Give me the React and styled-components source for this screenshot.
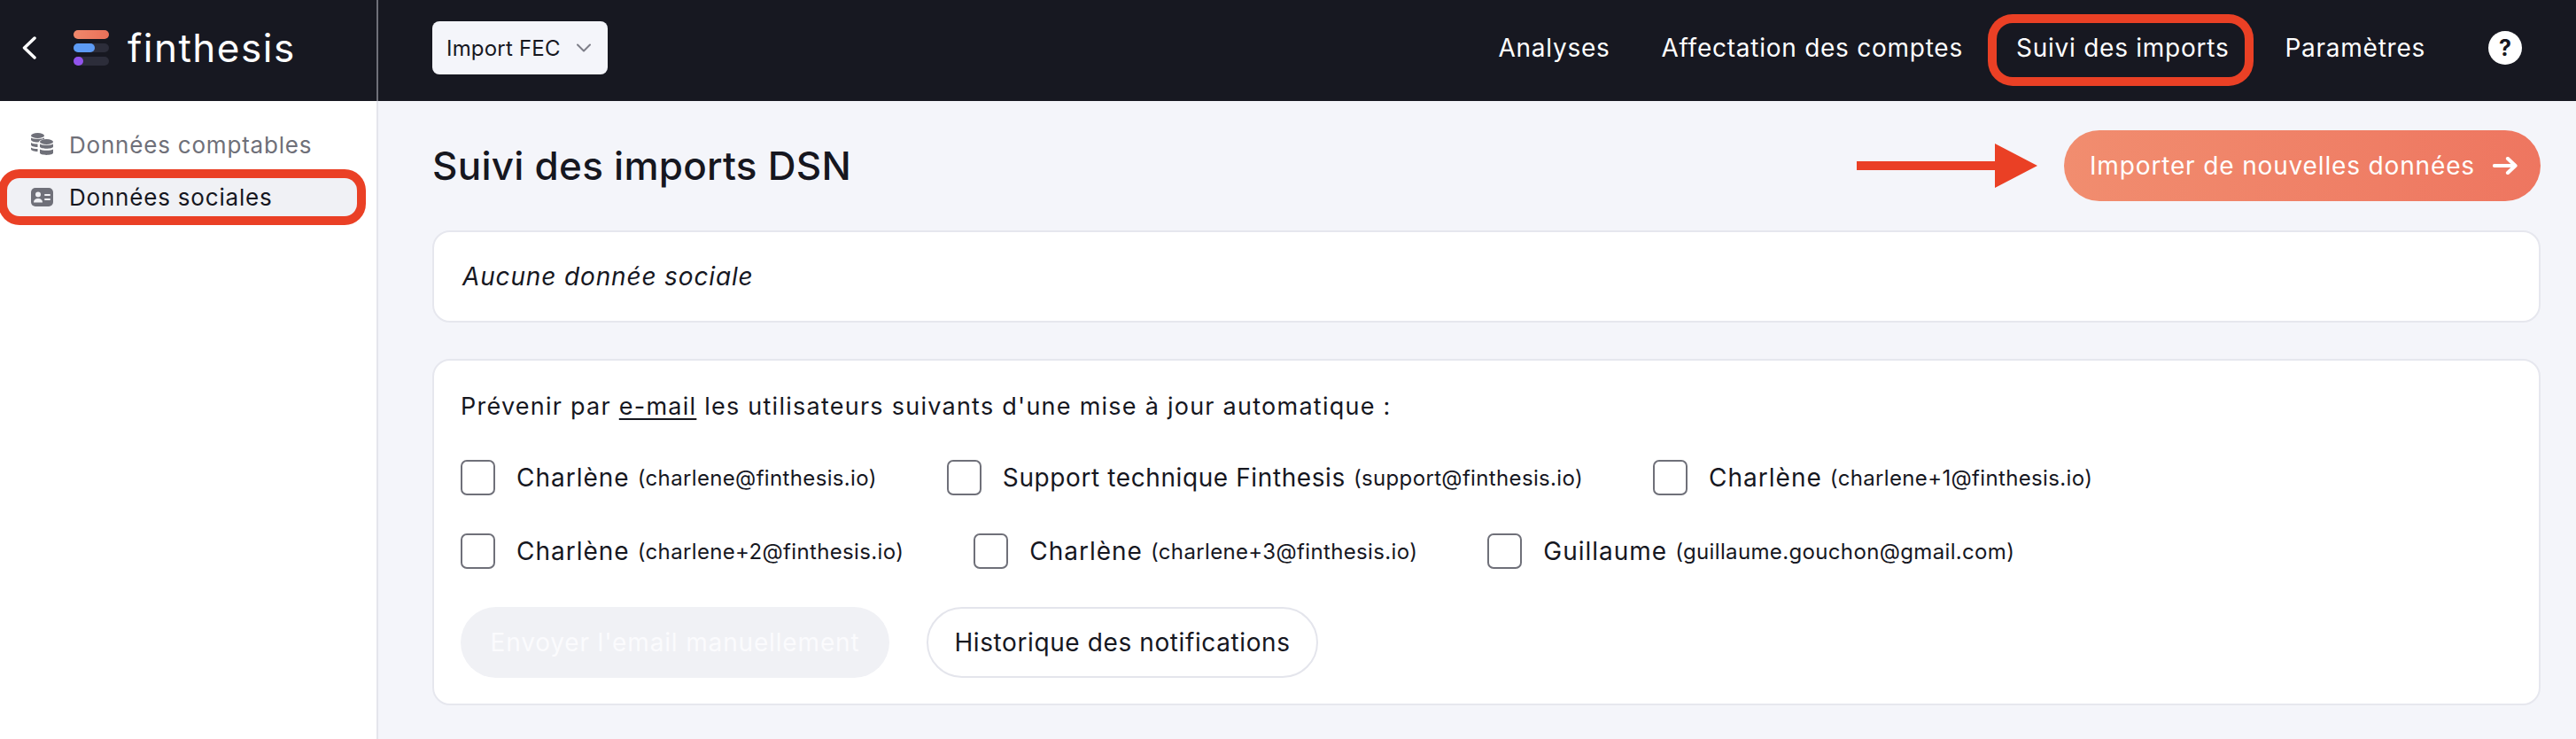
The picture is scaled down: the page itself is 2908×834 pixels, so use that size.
import React from "react";
import styled, { createGlobalStyle } from "styled-components";

const GlobalStyle = createGlobalStyle`
  html, body {
    margin: 0;
    padding: 0;
    background: #f4f5fa;
    font-family: "Inter", "Liberation Sans", sans-serif;
    color: #16171f;
  }
  * { box-sizing: border-box; }
`;

const Page = styled.div`
  width: 2908px;
  height: 834px;
  overflow: hidden;
  display: flex;
  flex-direction: column;
`;

const TopBar = styled.header`
  height: 114px;
  flex: none;
  display: flex;
  align-items: stretch;
  background: #171821;
`;

const Brand = styled.div`
  width: 427px;
  flex: none;
  display: flex;
  align-items: center;
  padding-left: 25px;
  border-right: 2px solid #6f7079;
`;

const BackIcon = styled.svg`
  flex: none;
  margin-right: 42px;
  margin-top: -6px;
`;

const LogoIcon = styled.svg`
  flex: none;
  margin-top: -6px;
`;

const LogoWord = styled.span`
  margin-left: 21px;
  margin-top: -6px;
  font-size: 44px;
  font-weight: 400;
  letter-spacing: 1.5px;
  color: #ffffff;
`;

const TopBarRest = styled.div`
  flex: 1;
  display: flex;
  align-items: center;
  padding: 0 61px 0 61px;
`;

const ModeSelect = styled.div`
  width: 198px;
  height: 60px;
  margin-top: -6px;
  display: flex;
  align-items: center;
  justify-content: space-between;
  padding: 0 19px 0 16px;
  background: #f4f5fa;
  border-radius: 8px;
  font-size: 24px;
  letter-spacing: 0.2px;
`;

const Nav = styled.nav`
  margin-left: auto;
  margin-top: -1px;
  display: flex;
  align-items: center;
`;

const NavItem = styled.a`
  display: flex;
  align-items: center;
  height: 61px;
  margin-left: ${(p) => p.$gap}px;
  padding: ${(p) => (p.$ringed ? "0 18px 5px 22px" : "0 0 5px")};
  font-size: 28px;
  font-weight: 400;
  letter-spacing: 0.75px;
  color: #ffffff;
  border-radius: 18px;
  box-shadow: ${(p) => (p.$ringed ? "0 0 0 10px #ea4025" : "none")};
`;

const HelpDot = styled.span`
  width: 38px;
  height: 38px;
  margin: 0 0 5px 71px;
  border-radius: 50%;
  background: #ffffff;
  color: #171821;
  font-size: 25px;
  font-weight: 700;
  display: flex;
  align-items: center;
  justify-content: center;
`;

const Body = styled.div`
  flex: 1;
  display: flex;
  min-height: 0;
`;

const SideBar = styled.aside`
  width: 427px;
  flex: none;
  background: #ffffff;
  border-right: 2px solid #e4e5ec;
  padding-top: 28px;
  display: flex;
  flex-direction: column;
  gap: 16px;
`;

const SideItem = styled.a`
  display: flex;
  align-items: center;
  gap: 18px;
  width: 395px;
  height: 43px;
  margin-left: 8px;
  padding-left: 27px;
  font-size: 26px;
  letter-spacing: 0.8px;
  color: ${(p) => (p.$active ? "#16171f" : "#6f7079")};
  background: ${(p) => (p.$active ? "#f0f1f5" : "transparent")};
  border-radius: 14px;
  box-shadow: ${(p) => (p.$active ? "0 0 0 10px #ea4025" : "none")};
`;

const SideIcon = styled.svg`
  flex: none;
`;

const Main = styled.main`
  flex: 1;
  padding: 33px 40px 0 61px;
  display: flex;
  flex-direction: column;
`;

const TitleRow = styled.div`
  display: flex;
  align-items: center;
  height: 80px;
`;

const Title = styled.h1`
  margin: 0;
  font-size: 44px;
  font-weight: 500;
  letter-spacing: 0.25px;
  color: #16171f;
`;

const RedArrow = styled.svg`
  margin-left: auto;
  margin-right: 30px;
  flex: none;
`;

const ImportButton = styled.button`
  width: 538px;
  height: 80px;
  border: 0;
  border-radius: 40px;
  background: linear-gradient(90deg, #f18d6f, #ee7660);
  color: #ffffff;
  font: 400 28px "Inter", "Liberation Sans", sans-serif;
  letter-spacing: 0.85px;
  display: flex;
  align-items: center;
  padding: 0 26px 0 29px;
  justify-content: space-between;
`;

const Card = styled.section`
  background: #ffffff;
  border: 2px solid #e6e7ee;
  border-radius: 20px;
  margin-top: ${(p) => p.$top}px;
`;

const EmptyCard = styled(Card)`
  height: 104px;
  display: flex;
  align-items: center;
  padding: 0 32px;
  font-size: 28px;
  font-style: italic;
  letter-spacing: 0.85px;
`;

const NotifyCard = styled(Card)`
  height: 391px;
  padding: 32px 30px 0 30px;
  display: flex;
  flex-direction: column;
`;

const NotifyLabel = styled.p`
  margin: 0 0 40px;
  height: 40px;
  line-height: 40px;
  font-size: 27px;
  letter-spacing: 1.25px;
`;

const EmailWord = styled.span`
  text-decoration: underline;
  text-underline-offset: 4px;
`;

const PersonRow = styled.div`
  display: flex;
  align-items: center;
  height: 40px;
  margin-bottom: 43px;
  gap: 79px;
`;

const Person = styled.label`
  display: flex;
  align-items: center;
`;

const Box = styled.span`
  width: 39px;
  height: 40px;
  flex: none;
  background: #ffffff;
  border: 2px solid #6f7079;
  border-radius: 7px;
  margin-right: 24px;
`;

const PersonName = styled.span`
  font-size: 28px;
  letter-spacing: ${(p) => (p.$long ? "0.6px" : "1px")};
  margin-right: 9px;
`;

const PersonMail = styled.span`
  font-size: 24px;
  letter-spacing: 0.35px;
`;

const ButtonRow = styled.div`
  display: flex;
  gap: 42px;
`;

const PillButton = styled.button`
  height: 80px;
  width: ${(p) => p.$width}px;
  border-radius: 40px;
  border: ${(p) => (p.$muted ? "0" : "2px solid #e4e5ec")};
  background: ${(p) => (p.$muted ? "#f0f1f5" : "#ffffff")};
  color: ${(p) => (p.$muted ? "#fbfbfd" : "#16171f")};
  font: 400 28px "Inter", "Liberation Sans", sans-serif;
  letter-spacing: ${(p) => (p.$muted ? "0.85px" : "0.6px")};
  padding: 0;
`;

const LogoMark = () => (
  <LogoIcon width="40" height="40" viewBox="0 0 40 40">
    <defs>
      <linearGradient id="logoTop" x1="0" x2="1" y1="0" y2="0">
        <stop offset="0" stopColor="#f0886c" />
        <stop offset="1" stopColor="#ea7058" />
      </linearGradient>
    </defs>
    <rect x="0" y="0" width="40" height="10" rx="5" fill="url(#logoTop)" />
    <rect x="0" y="15" width="40" height="10" rx="5" fill="#2c2d3a" />
    <rect x="0" y="15" width="24" height="10" rx="5" fill="#5d9bf5" />
    <rect x="0" y="30" width="40" height="10" rx="5" fill="#2c2d3a" />
    <rect x="0" y="30" width="11" height="10" rx="5" fill="#9153ec" />
  </LogoIcon>
);

const CoinsIcon = () => (
  <SideIcon width="25" height="27" viewBox="0 0 25 27" fill="#6f7079">
    <ellipse cx="7.500" cy="3" rx="7.500" ry="3" />
    <path d="M0 5.500c2 1.800 13 1.800 15 0v1.500c-3 .3-5.500 1.500-6.500 3.400c-4 .3-8.500-.8-8.500-2.900z" />
    <path d="M0 11c1.500 1 4 1.500 7.500 1.500v3.500c-4 0-7.500-1.100-7.500-2.800z" />
    <path d="M0 16.500c1.500 1 4 1.500 7.500 1.500v3c-4 0-7.500-1-7.500-2.700z" />
    <ellipse cx="17.500" cy="10" rx="7.500" ry="3" />
    <path d="M10 12.500c2 1.800 13 1.800 15 0v3c0 3-15 3-15 0z" />
    <path d="M10 18.500c2 1.800 13 1.800 15 0v4c0 3.200-15 3.200-15 0z" />
  </SideIcon>
);

const IdCardIcon = () => (
  <SideIcon width="25" height="21" viewBox="0 0 25 21">
    <rect width="25" height="21" rx="5" fill="#6f7079" />
    <circle cx="8" cy="7.500" r="3" fill="#f0f1f5" />
    <path d="M3 16.500c0-3 2-4.500 5-4.500s5 1.500 5 4.500z" fill="#f0f1f5" />
    <rect x="15" y="7" width="7" height="2" rx="1" fill="#f0f1f5" />
    <rect x="15" y="12" width="7" height="2" rx="1" fill="#f0f1f5" />
  </SideIcon>
);

const firstRow = [
  ["Charlène", "charlene@finthesis.io"],
  ["Support technique Finthesis", "support@finthesis.io"],
  ["Charlène", "charlene+1@finthesis.io"],
];

const secondRow = [
  ["Charlène", "charlene+2@finthesis.io"],
  ["Charlène", "charlene+3@finthesis.io"],
  ["Guillaume", "guillaume.gouchon@gmail.com"],
];

const People = ({ rows }) => (
  <PersonRow>
    {rows.map(([name, mail]) => (
      <Person key={mail}>
        <Box />
        <PersonName $long={name.length > 20}>{name}</PersonName>
        <PersonMail>({mail})</PersonMail>
      </Person>
    ))}
  </PersonRow>
);

export default function App() {
  return (
    <Page>
      <GlobalStyle />
      <TopBar>
        <Brand>
          <BackIcon width="16" height="26" viewBox="0 0 16 26" fill="none">
            <path d="M14 2L2.500 13L14 24" stroke="#fff" strokeWidth="3.500" strokeLinecap="round" strokeLinejoin="round" />
          </BackIcon>
          <LogoMark />
          <LogoWord>finthesis</LogoWord>
        </Brand>
        <TopBarRest>
          <ModeSelect>
            Import FEC
            <svg width="16" height="10" viewBox="0 0 16 10" fill="none">
              <path d="M1 1.500L8 8.500L15 1.500" stroke="#7d7e88" strokeWidth="2" strokeLinecap="round" strokeLinejoin="round" />
            </svg>
          </ModeSelect>
          <Nav>
            <NavItem $gap={0}>Analyses</NavItem>
            <NavItem $gap={58}>Affectation des comptes</NavItem>
            <NavItem $gap={38} $ringed>Suivi des imports</NavItem>
            <NavItem $gap={45}>Paramètres</NavItem>
            <HelpDot>?</HelpDot>
          </Nav>
        </TopBarRest>
      </TopBar>
      <Body>
        <SideBar>
          <SideItem>
            <CoinsIcon />
            Données comptables
          </SideItem>
          <SideItem $active>
            <IdCardIcon />
            Données sociales
          </SideItem>
        </SideBar>
        <Main>
          <TitleRow>
            <Title>Suivi des imports DSN</Title>
            <RedArrow width="204" height="50" viewBox="0 0 204 50">
              <path d="M0 20H156V0L204 25L156 50V30H0z" fill="#ea4025" />
            </RedArrow>
            <ImportButton>
              Importer de nouvelles données
              <svg width="28" height="20" viewBox="0 0 28 20" fill="none">
                <path d="M2 10H25.500M17 2L25.500 10L17 18" stroke="#fff" strokeWidth="4.200" strokeLinecap="round" strokeLinejoin="round" />
              </svg>
            </ImportButton>
          </TitleRow>
          <EmptyCard $top={33}>Aucune donnée sociale</EmptyCard>
          <NotifyCard $top={41}>
            <NotifyLabel>
              Prévenir par <EmailWord>e-mail</EmailWord> les utilisateurs suivants d'une mise à jour automatique :
            </NotifyLabel>
            <People rows={firstRow} />
            <People rows={secondRow} />
            <ButtonRow>
              <PillButton $muted $width={484}>Envoyer l'email manuellement</PillButton>
              <PillButton $width={442}>Historique des notifications</PillButton>
            </ButtonRow>
          </NotifyCard>
        </Main>
      </Body>
    </Page>
  );
}
